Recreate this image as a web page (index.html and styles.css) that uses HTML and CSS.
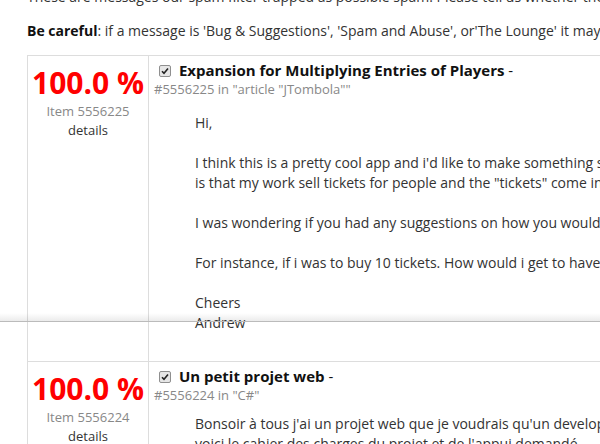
FILE: index.html
```html
<!DOCTYPE html>
<html>
<head>
    <title>Spam Queue</title>
    <link rel="stylesheet" href="styles.css">
</head>
<body>
    <div class="page">
        <p class="intro">These are messages our spam filter trapped as possible spam. Please tell us whether they are spam or not.</p>
        <p class="warn"><b>Be careful</b>: if a message is 'Bug &amp; Suggestions', 'Spam and Abuse', or'The Lounge' it may be a report about spam.</p>

        <div class="queue">
            <div class="row">
                <div class="score-cell">
                    <div class="score">100.0 %</div>
                    <div class="item-id">Item 5556225</div>
                    <a class="details">details</a>
                </div>
                <div class="msg-cell">
                    <div class="msg-title">
                        <svg class="check" width="12" height="12" viewBox="0 0 12 12"><rect x="0.5" y="0.5" width="11" height="11" rx="1.5" fill="#e6e6e6" stroke="#8f8f8f"/><path d="M3 6.2 L5 8.3 L9 3.6" fill="none" stroke="#222" stroke-width="1.6"/></svg>
                        <b>Expansion for Multiplying Entries of Players</b> -
                    </div>
                    <div class="msg-meta">#5556225 in "article "JTombola""</div>
                    <div class="msg-body">
                        <p>Hi,</p>
                        <p>I think this is a pretty cool app and i'd like to make something similar. The problem<br>is that my work sell tickets for people and the "tickets" come in sets of 5.</p>
                        <p>I was wondering if you had any suggestions on how you would multiply the entries.</p>
                        <p>For instance, if i was to buy 10 tickets. How would i get to have 50 entries?</p>
                        <p>Cheers<br>Andrew</p>
                    </div>
                </div>
            </div>

            <div class="row">
                <div class="score-cell">
                    <div class="score">100.0 %</div>
                    <div class="item-id">Item 5556224</div>
                    <a class="details">details</a>
                </div>
                <div class="msg-cell">
                    <div class="msg-title">
                        <svg class="check" width="12" height="12" viewBox="0 0 12 12"><rect x="0.5" y="0.5" width="11" height="11" rx="1.5" fill="#e6e6e6" stroke="#8f8f8f"/><path d="M3 6.2 L5 8.3 L9 3.6" fill="none" stroke="#222" stroke-width="1.6"/></svg>
                        <b>Un petit projet web</b> -
                    </div>
                    <div class="msg-meta">#5556224 in "C#"</div>
                    <div class="msg-body tight">
                        <p>Bonsoir à tous j'ai un projet web que je voudrais qu'un developpeur m'aide à réaliser.<br>voici le cahier des charges du projet et de l'appui demandé.</p>
                    </div>
                </div>
            </div>
        </div>
    </div>

    <!-- scroll seam -->
    <div class="fold"></div>
</body>
</html>
```

FILE: styles.css
```css
/* Spam queue page */
html, body {
    margin: 0;
    overflow: hidden;
}

body {
    font-family: "Open Sans", "Noto Sans", sans-serif;
    font-size: 14px;
    color: #333;
    background: white;
}

.page {
    padding-left: 27px;
    margin-top: -13px;
}

.intro,
.warn {
    margin: 0 0 14px;
    line-height: 20px;
    white-space: nowrap;
}

.warn b {
    color: #111;
}

.queue {
    width: 1000px;
    border-top: 1px solid #ddd;
    border-left: 1px solid #ddd;
}

.row {
    display: flex;
    border-bottom: 1px solid #ddd;
}

.score-cell {
    width: 120px;
    flex: none;
    border-right: 1px solid #ddd;
    text-align: center;
    padding-top: 10px;
}

.score {
    color: #f00;
    font-weight: bold;
    font-size: 30px;
    line-height: 34px;
}

.item-id {
    color: #888;
    font-size: 13px;
    line-height: 20px;
    margin-top: 1px;
}

.details {
    display: block;
    color: #333;
    font-size: 13px;
    line-height: 19px;
}

.msg-cell {
    flex: 1;
    padding: 4px 0 8px 5px;
}

.msg-title {
    font-size: 15px;
    line-height: 20px;
    color: #111;
}

.check {
    margin: 0 4px 0 5px;
    vertical-align: -1px;
}

.msg-meta {
    color: #888;
    font-size: 13px;
    line-height: 18px;
}

.msg-body {
    padding-left: 41px;
    margin-top: 15px;
    white-space: nowrap;
}

.msg-body.tight {
    margin-top: 10px;
}

.msg-body p {
    margin: 0 0 20px;
    line-height: 20px;
}

.fold {
    position: absolute;
    left: 0;
    right: 0;
    top: 313px;
    height: 8px;
    border-bottom: 1px solid #bbb;
    background: linear-gradient(to bottom, rgba(0,0,0,0), rgba(0,0,0,0.08));
}
```
